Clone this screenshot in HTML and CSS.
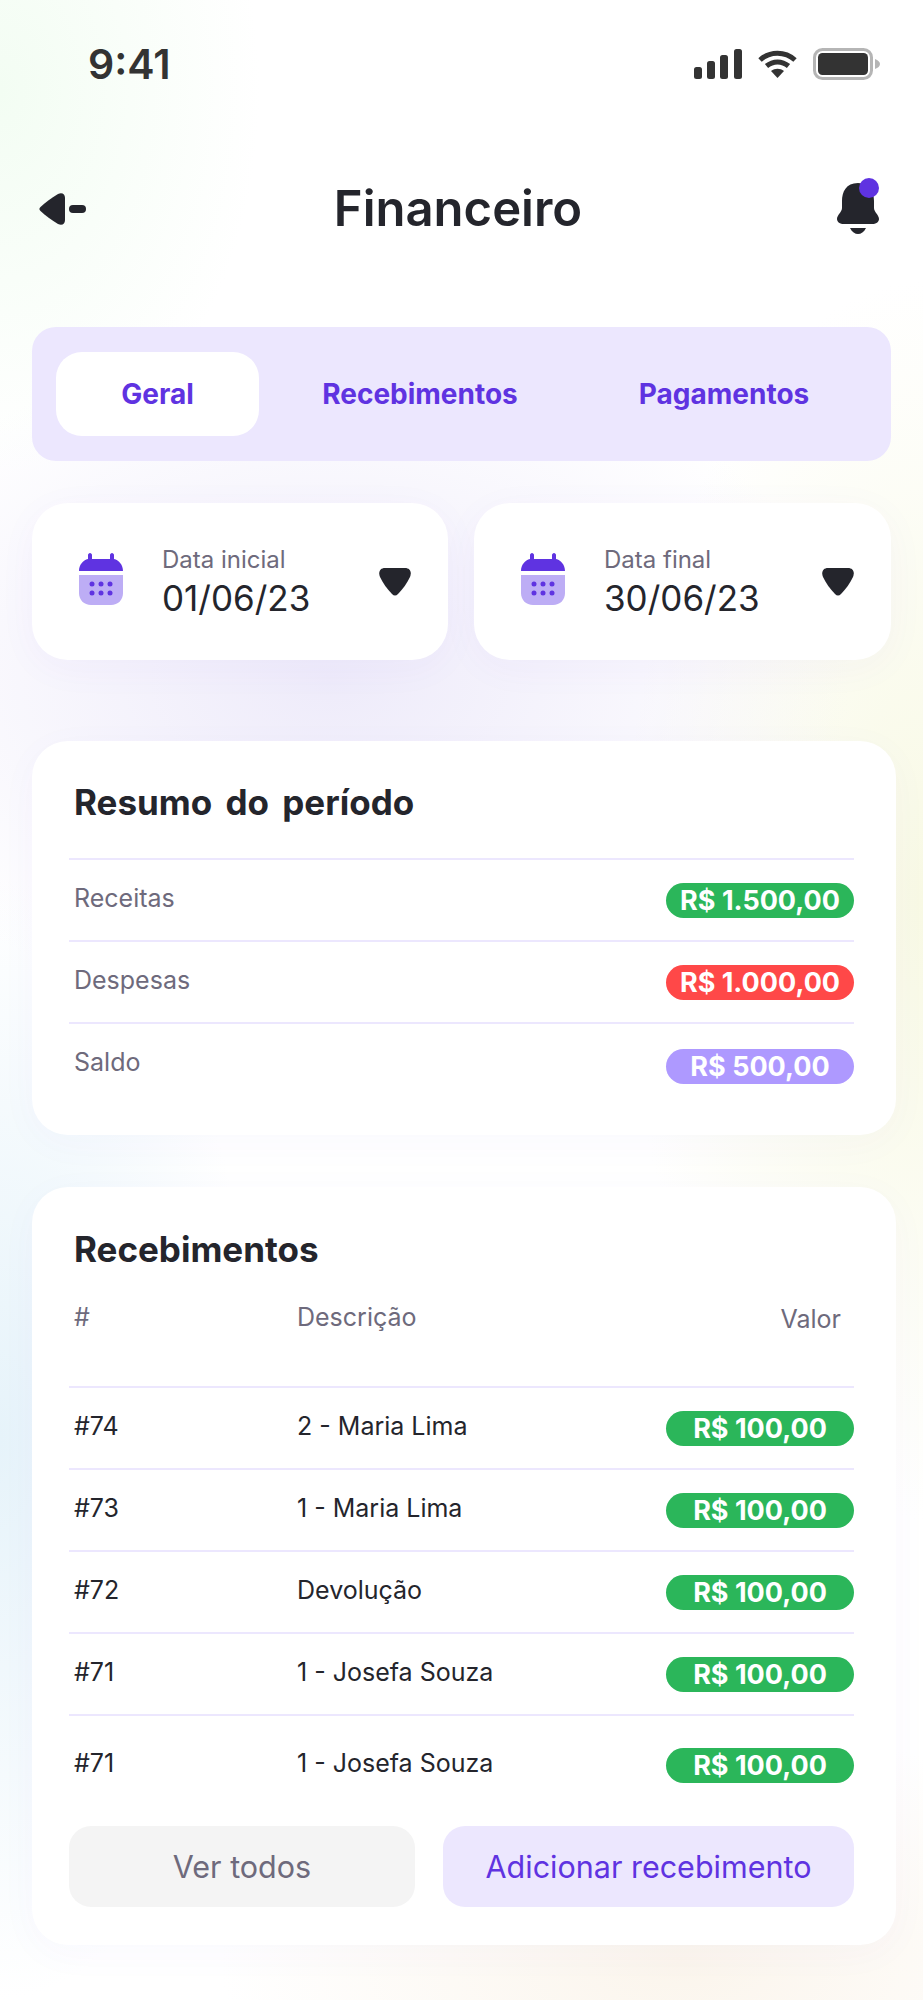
FILE: index.html
```html
<!DOCTYPE html>
<html lang="pt-BR">
<head>
    <meta charset="UTF-8">
    <meta name="viewport" content="width=device-width, initial-scale=1.0">
    <title>Financeiro</title>
    <link rel="stylesheet" href="styles.css">
</head>
<body>
<div class="page">
    <div class="status-bar">
        <span class="clock">9:41</span>
        <div class="status-icons">
            <svg class="signal" width="48" height="30" viewBox="0 0 48 30">
                <rect x="0" y="18" width="8" height="12" rx="2.5"/>
                <rect x="13" y="12" width="8" height="18" rx="2.5"/>
                <rect x="26" y="6" width="8" height="24" rx="2.5"/>
                <rect x="40" y="0" width="8" height="30" rx="2.5"/>
            </svg>
            <svg class="wifi" width="39" height="28" viewBox="0 0 39 28">
                <path d="M2 10 C12 1 27 1 37 10" fill="none" stroke="#333" stroke-width="5"/>
                <path d="M8.500 16 C15 10.500 24 10.500 30.500 16" fill="none" stroke="#333" stroke-width="5"/>
                <path d="M13 21 C17 18 22 18 26 21 L19.500 28 Z" fill="#333"/>
            </svg>
            <svg class="battery" width="67" height="32" viewBox="0 0 67 32">
                <rect x="1.500" y="1.500" width="57" height="29" rx="8" fill="none" stroke="#b5b5b5" stroke-width="3"/>
                <rect x="5" y="5" width="50" height="22" rx="4.500" fill="#333"/>
                <path d="M62 11 C65 12 67 14 67 16 C67 18 65 20 62 21 Z" fill="#b5b5b5"/>
            </svg>
        </div>
    </div>

    <div class="top-bar">
        <svg class="back-icon" width="47" height="32" viewBox="0 0 47 32">
            <path d="M19 1 C23 -1 26 1 26 5 L26 27 C26 31 23 33 19 31 C12 27 6 22 1.500 18 C0 16.500 0 15.500 1.500 14 C6 10 12 5 19 1 Z"/>
            <rect x="30" y="12" width="17" height="8" rx="4"/>
        </svg>
        <span class="page-title">Financeiro</span>
        <svg class="bell-icon" width="44" height="57" viewBox="0 0 44 57">
            <path d="M22 5 C10 5 6 14 6 23 L6 30 C6 34 1 37 1 41 C1 44 4 46 8 46 L36 46 C40 46 43 44 43 41 C43 37 38 34 38 30 L38 23 C38 14 34 5 22 5 Z"/>
            <path d="M14 50 L30 50 C28 54 25 56 22 56 C19 56 16 54 14 50 Z"/>
            <circle class="bell-dot" cx="33" cy="10" r="10"/>
        </svg>
    </div>

    <div class="tabs">
        <span class="tab active">Geral</span>
        <span class="tab">Recebimentos</span>
        <span class="tab">Pagamentos</span>
    </div>

    <div class="dates">
        <div class="date-card">
            <svg class="calendar" width="44" height="52" viewBox="0 0 44 52">
                <path class="cal-top" d="M11 0 C12 0 13 1 13 2 L13 6 L31 6 C31 6 31 3 31 2 C31 1 32 0 33 0 C34 0 35 1 35 2 L35 6 C40 7 44 12 44 18 L0 18 C0 12 4 7 9 6 L9 2 C9 1 10 0 11 0 Z"/>
                <path class="cal-bottom" d="M0 22 L44 22 L44 40 C44 47 39 52 32 52 L12 52 C5 52 0 47 0 40 Z"/>
                <g class="cal-dots">
                    <circle cx="13" cy="31" r="2.500"/><circle cx="22" cy="31" r="2.500"/><circle cx="31" cy="31" r="2.500"/>
                    <circle cx="13" cy="40" r="2.500"/><circle cx="22" cy="40" r="2.500"/><circle cx="31" cy="40" r="2.500"/>
                </g>
            </svg>
            <div class="date-text">
                <span class="date-label">Data inicial</span>
                <span class="date-value">01/06/23</span>
            </div>
            <svg class="caret" width="32" height="28" viewBox="0 0 32 28">
                <path d="M6 0 L26 0 C31 0 33 4 31 9 C28 15 24 21 19 26 C17 28 15 28 13 26 C8 21 4 15 1 9 C-1 4 1 0 6 0 Z"/>
            </svg>
        </div>
        <div class="date-card">
            <svg class="calendar" width="44" height="52" viewBox="0 0 44 52">
                <path class="cal-top" d="M11 0 C12 0 13 1 13 2 L13 6 L31 6 C31 6 31 3 31 2 C31 1 32 0 33 0 C34 0 35 1 35 2 L35 6 C40 7 44 12 44 18 L0 18 C0 12 4 7 9 6 L9 2 C9 1 10 0 11 0 Z"/>
                <path class="cal-bottom" d="M0 22 L44 22 L44 40 C44 47 39 52 32 52 L12 52 C5 52 0 47 0 40 Z"/>
                <g class="cal-dots">
                    <circle cx="13" cy="31" r="2.500"/><circle cx="22" cy="31" r="2.500"/><circle cx="31" cy="31" r="2.500"/>
                    <circle cx="13" cy="40" r="2.500"/><circle cx="22" cy="40" r="2.500"/><circle cx="31" cy="40" r="2.500"/>
                </g>
            </svg>
            <div class="date-text">
                <span class="date-label">Data final</span>
                <span class="date-value">30/06/23</span>
            </div>
            <svg class="caret" width="32" height="28" viewBox="0 0 32 28">
                <path d="M6 0 L26 0 C31 0 33 4 31 9 C28 15 24 21 19 26 C17 28 15 28 13 26 C8 21 4 15 1 9 C-1 4 1 0 6 0 Z"/>
            </svg>
        </div>
    </div>

    <div class="card summary">
        <div class="card-title">Resumo do período</div>
        <div class="summary-row">
            <span class="muted">Receitas</span>
            <span class="badge green">R$ 1.500,00</span>
        </div>
        <div class="summary-row">
            <span class="muted">Despesas</span>
            <span class="badge red">R$ 1.000,00</span>
        </div>
        <div class="summary-row last">
            <span class="muted">Saldo</span>
            <span class="badge lilac">R$ 500,00</span>
        </div>
    </div>

    <div class="card receipts">
        <div class="card-title">Recebimentos</div>
        <div class="table-head">
            <span class="muted">#</span>
            <span class="muted">Descrição</span>
            <span class="muted head-value">Valor</span>
        </div>
        <div class="table-row">
            <span class="cell">#74</span>
            <span class="cell">2 - Maria Lima</span>
            <span class="badge green">R$ 100,00</span>
        </div>
        <div class="table-row">
            <span class="cell">#73</span>
            <span class="cell">1 - Maria Lima</span>
            <span class="badge green">R$ 100,00</span>
        </div>
        <div class="table-row">
            <span class="cell">#72</span>
            <span class="cell">Devolução</span>
            <span class="badge green">R$ 100,00</span>
        </div>
        <div class="table-row">
            <span class="cell">#71</span>
            <span class="cell">1 - Josefa Souza</span>
            <span class="badge green">R$ 100,00</span>
        </div>
        <div class="table-row last">
            <span class="cell">#71</span>
            <span class="cell">1 - Josefa Souza</span>
            <span class="badge green">R$ 100,00</span>
        </div>
        <div class="actions">
            <button class="btn btn-gray" type="button">Ver todos</button>
            <button class="btn btn-purple" type="button">Adicionar recebimento</button>
        </div>
    </div>
</div>
</body>
</html>
```

FILE: styles.css
```css
* {
    box-sizing: border-box;
}

body {
    margin: 0;
    font-family: Inter, "Liberation Sans", sans-serif;
    color: #24252c;
    background-color: #fff;
}

.page {
    width: 923px;
    height: 2000px;
    padding: 0 27px 0 32px;
    overflow: hidden;
    background:
        radial-gradient(ellipse 260px 380px at 0 90px, #f3fdf3 0, rgba(243, 253, 243, 0) 100%),
        radial-gradient(ellipse 520px 340px at 330px 680px, #eeebfa 0, rgba(238, 235, 250, 0) 100%),
        radial-gradient(ellipse 300px 620px at 923px 900px, #f8f9e4 0, rgba(248, 249, 228, 0) 100%),
        radial-gradient(ellipse 260px 560px at 0 1440px, #e6f3fa 0, rgba(230, 243, 250, 0) 100%),
        radial-gradient(ellipse 460px 240px at 680px 1960px, #fbf5ec 0, rgba(251, 245, 236, 0) 100%),
        #fff;
}

/* status bar */
.status-bar {
    height: 128px;
    margin-right: 5px;
    display: flex;
    align-items: center;
    justify-content: space-between;
    padding: 0 11px 0 56px;
}

.clock {
    font-size: 41px;
    font-weight: 600;
    color: #333;
}

.status-icons {
    display: flex;
    align-items: center;
    gap: 16px;
}

.signal {
    fill: #333;
}

/* header */
.top-bar {
    height: 160px;
    margin-right: 5px;
    display: flex;
    align-items: center;
    justify-content: space-between;
    padding: 0 11px 0 7px;
}

.back-icon,
.bell-icon,
.caret {
    fill: #24252c;
}

.back-icon {
    margin-top: 2px;
}

.bell-icon {
    margin-bottom: 3px;
}

.bell-dot {
    fill: #5f33e1;
}

.page-title {
    margin-right: 6px;
    font-size: 49px;
    font-weight: 600;
}

/* tabs */
.tabs {
    height: 134px;
    margin: 39px 5px 0 0;
    padding: 25px 24px;
    display: grid;
    grid-template-columns: 203px 322px 286px;
    background: #ece7fe;
    border-radius: 24px;
}

.tab {
    display: flex;
    align-items: center;
    justify-content: center;
    color: #5f33e1;
    font-size: 28px;
    font-weight: 700;
    border-radius: 26px;
}

.tab.active {
    background: #fff;
}

/* date filters */
.dates {
    margin: 42px 5px 0 0;
    display: grid;
    grid-template-columns: 416px 417px;
    gap: 26px;
}

.date-card {
    height: 157px;
    padding: 0 37px 0 47px;
    display: flex;
    align-items: center;
    background: #fff;
    border-radius: 36px;
    box-shadow: 0 8px 40px rgba(95, 51, 225, 0.04);
}

.calendar {
    flex: none;
    margin: 0 39px 5px 0;
}

.cal-top,
.cal-dots {
    fill: #5f33e1;
}

.cal-bottom {
    fill: #bdadf5;
}

.date-text {
    flex: 1;
    display: flex;
    flex-direction: column;
    gap: 3px;
}

.date-label {
    font-size: 24px;
    color: #6e6a7c;
}

.date-value {
    font-size: 35px;
}

/* cards */
.card {
    background: #fff;
    border-radius: 36px;
    padding: 0 42px 0 37px;
    box-shadow: 0 8px 40px rgba(95, 51, 225, 0.03);
}

.summary {
    height: 394px;
    margin-top: 81px;
}

.receipts {
    height: 758px;
    margin-top: 52px;
}

.card-title {
    padding-left: 5px;
    font-size: 35px;
    font-weight: 700;
    word-spacing: 5px;
}

.summary .card-title {
    height: 117px;
    line-height: 122px;
}

.receipts .card-title {
    height: 101px;
    line-height: 124px;
}

.muted {
    color: #6e6a7c;
}

.summary-row {
    height: 82px;
    padding-left: 5px;
    display: flex;
    align-items: center;
    justify-content: space-between;
    border-top: 2px solid #ece7fe;
    font-size: 25px;
}

.summary-row .muted {
    margin-bottom: 4px;
}

.summary-row.last {
    height: 86px;
}

.summary-row.last .muted {
    margin-bottom: 8px;
}

.badge {
    flex: none;
    width: 188px;
    height: 35px;
    display: flex;
    align-items: center;
    justify-content: center;
    color: #fff;
    font-size: 27px;
    font-weight: 700;
    border-radius: 18px;
}

.green {
    background: #2bb65a;
}

.red {
    background: #ff4848;
}

.lilac {
    background: #ae99ff;
}

/* receipts table */
.table-head,
.table-row {
    padding-left: 5px;
    display: grid;
    grid-template-columns: 223px 1fr auto;
    align-items: center;
    font-size: 25px;
}

.table-head {
    height: 98px;
    padding-bottom: 40px;
}

.head-value {
    padding-right: 13px;
    padding-top: 4px;
}

.table-row {
    height: 82px;
    border-top: 2px solid #ece7fe;
}

.cell {
    margin-bottom: 4px;
}

.table-row.last {
    height: 100px;
}

/* buttons */
.actions {
    margin-top: 12px;
    display: grid;
    grid-template-columns: 346px 1fr;
    gap: 28px;
}

.btn {
    height: 81px;
    border: none;
    border-radius: 22px;
    font-family: inherit;
    font-size: 30.500px;
}

.btn-gray {
    background: #f4f4f4;
    color: #6e6a7c;
}

.btn-purple {
    background: #ece7fe;
    color: #5f33e1;
}
```
